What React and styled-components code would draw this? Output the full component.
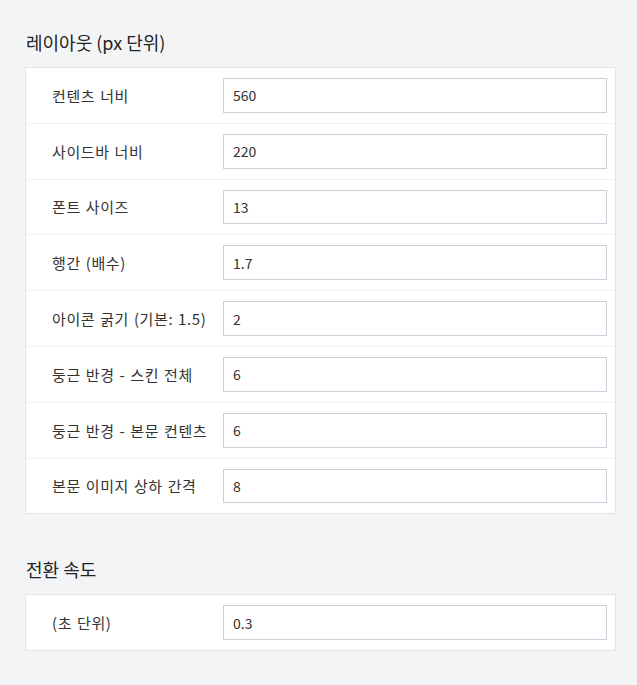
import React from 'react';
import styled, { createGlobalStyle } from 'styled-components';

const GlobalStyle = createGlobalStyle`
  html, body {
    margin: 0;
    padding: 0;
    background-color: #f3f4f6;
  }
  body {
    font-family: "Noto Sans CJK KR", "Noto Sans", sans-serif;
    color: #333;
  }
`;

const Page = styled.div`
  padding: 30px 21px 0 25px;
  display: flex;
  flex-direction: column;
`;

const Section = styled.section`
  display: flex;
  flex-direction: column;

  & + & {
    margin-top: 43px;
  }
`;

const SectionTitle = styled.h2`
  margin: 0 0 12px 1px;
  font-size: 18px;
  font-weight: 400;
  line-height: 25px;
  color: #222;
`;

const Card = styled.div`
  background-color: #fff;
  border: 1px solid #e1e4e9;
`;

const Row = styled.div`
  display: grid;
  grid-template-columns: 171px 1fr;
  align-items: center;
  padding: 10px 8px 10px 26px;

  & + & {
    border-top: 1px solid #f0f1f3;
  }
`;

const Label = styled.label`
  font-size: 15px;
  font-weight: 400;
  letter-spacing: 0.6px;
  word-spacing: 1px;
  color: #333;
  white-space: nowrap;
`;

const Input = styled.input`
  box-sizing: border-box;
  width: 100%;
  height: 34.8px;
  padding: 0 9px;
  border: 1px solid #c9d0d9;
  border-radius: 0;
  font-family: inherit;
  font-size: 14px;
  color: #333;
  background-color: #fff;
  outline: none;
`;

const layoutFields = [
  { label: '컨텐츠 너비', value: '560' },
  { label: '사이드바 너비', value: '220' },
  { label: '폰트 사이즈', value: '13' },
  { label: '행간 (배수)', value: '1.7' },
  { label: '아이콘 굵기 (기본: 1.5)', value: '2' },
  { label: '둥근 반경 - 스킨 전체', value: '6' },
  { label: '둥근 반경 - 본문 컨텐츠', value: '6' },
  { label: '본문 이미지 상하 간격', value: '8' },
];

const speedFields = [{ label: '(초 단위)', value: '0.3' }];

const FieldCard = ({ fields }) => (
  <Card>
    {fields.map((f) => (
      <Row key={f.label}>
        <Label>{f.label}</Label>
        <Input type="text" defaultValue={f.value} />
      </Row>
    ))}
  </Card>
);

const App = () => (
  <>
    <GlobalStyle />
    <Page>
      <Section>
        <SectionTitle>레이아웃 (px 단위)</SectionTitle>
        <FieldCard fields={layoutFields} />
      </Section>
      <Section>
        <SectionTitle>전환 속도</SectionTitle>
        <FieldCard fields={speedFields} />
      </Section>
    </Page>
  </>
);

export default App;
